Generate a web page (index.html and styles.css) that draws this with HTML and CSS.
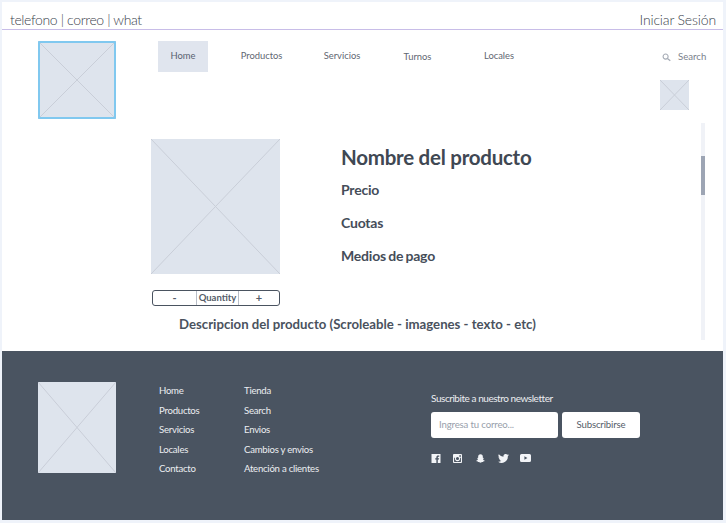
FILE: index.html
```html
<!DOCTYPE html>
<html lang="es">
<head>
<meta charset="utf-8">
<title>Producto</title>
<link rel="stylesheet" href="styles.css">
</head>
<body>
<div class="frame">
  <div class="topbar"><span class="contact">telefono | correo | what</span><span class="login">Iniciar Sesión</span></div>
  <header class="header">
    <svg class="ph ph-logo" viewBox="0 0 78 78" preserveAspectRatio="none"><rect width="78" height="78" fill="#dee4ed"/><path d="M0 0L78 78M78 0L0 78" stroke="#c9ced8" stroke-width="1"/></svg>
    <nav class="nav">
      <a class="nav-item nav-home">Home</a>
      <a class="nav-item nav-productos">Productos</a>
      <a class="nav-item nav-servicios">Servicios</a>
      <a class="nav-item nav-turnos">Turnos</a>
      <a class="nav-item nav-locales">Locales</a>
    </nav>
    <div class="side">
      <div class="search">
        <svg class="search-icon" viewBox="0 0 10 10"><circle cx="4" cy="4" r="2.8" fill="none" stroke="#a5abb5" stroke-width="1.2"/><path d="M6 6L9.2 8.6" stroke="#a5abb5" stroke-width="1.4"/></svg>
        <span>Search</span>
      </div>
      <svg class="ph ph-cart" viewBox="0 0 29 30" preserveAspectRatio="none"><rect width="29" height="30" fill="#dee4ed"/><path d="M0 0L29 30M29 0L0 30" stroke="#c9ced8" stroke-width="1"/></svg>
    </div>
  </header>
  <main class="main">
    <div class="product">
      <div class="gallery">
        <svg class="ph ph-product" viewBox="0 0 129 135" preserveAspectRatio="none"><rect width="129" height="135" fill="#dee4ed"/><path d="M0 0L129 135M129 0L0 135" stroke="#c9ced8" stroke-width="1"/></svg>
        <div class="qty"><span class="qty-btn">-</span><span class="qty-label">Quantity</span><span class="qty-btn">+</span></div>
      </div>
      <div class="info">
        <h1 class="title">Nombre del producto</h1>
        <p class="line">Precio</p>
        <p class="line">Cuotas</p>
        <p class="line">Medios de pago</p>
      </div>
    </div>
    <p class="desc">Descripcion del producto (Scroleable - imagenes - texto - etc)</p>
    <div class="scrollbar"><div class="thumb"></div></div>
  </main>
  <footer class="footer">
    <svg class="ph ph-foot" viewBox="0 0 78 91" preserveAspectRatio="none"><rect width="78" height="91" fill="#dee4ed"/><path d="M0 0L78 91M78 0L0 91" stroke="#c9ced8" stroke-width="1"/></svg>
    <ul class="links links-a">
      <li>Home</li><li>Productos</li><li>Servicios</li><li>Locales</li><li>Contacto</li>
    </ul>
    <ul class="links links-b">
      <li>Tienda</li><li>Search</li><li>Envios</li><li>Cambios y envios</li><li>Atención a clientes</li>
    </ul>
    <div class="news">
      <div class="news-title">Suscribite a nuestro newsletter</div>
      <div class="news-form">
        <div class="news-input">Ingresa tu correo...</div>
        <div class="news-btn">Subscribirse</div>
      </div>
      <div class="social">
        <svg viewBox="0 0 10 10"><path fill="#f2f4f7" fill-rule="evenodd" d="M0 0H10V10H7V6.2H8.3L8.5 4.7H7V3.8C7 3.3 7.2 3 7.8 3H8.6V1.7C8.3 1.6 7.8 1.6 7.3 1.6 6.2 1.6 5.4 2.3 5.4 3.6V4.7H4.1V6.2H5.4V10H0Z"/></svg>
        <svg viewBox="0 0 10 10"><path fill="#f2f4f7" fill-rule="evenodd" d="M1 0H9A1 1 0 0 1 10 1V9A1 1 0 0 1 9 10H1A1 1 0 0 1 0 9V1A1 1 0 0 1 1 0ZM1.2 4.2V8.4C1.2 8.7 1.3 8.8 1.6 8.8H8.4C8.7 8.8 8.8 8.7 8.8 8.4V4.2H7.7A2.9 2.9 0 1 1 2.3 4.2ZM7 1.3V3H8.8V1.3ZM5 3.3A1.7 1.7 0 1 0 5 6.7 1.7 1.7 0 1 0 5 3.3Z"/></svg>
        <svg viewBox="0 0 10 10"><path fill="#f2f4f7" d="M5 .4C6.8.4 7.6 1.7 7.6 3.1V4.2L8.6 4.4C8.4 5.3 7.8 5.9 8 6.4 8.2 6.9 9.2 7.2 9.8 7.4 9.6 8 8.8 8 8.1 8.2L7.7 9C6.8 8.8 6.2 9 5 9.6 3.8 9 3.2 8.8 2.3 9L1.9 8.2C1.2 8 .4 8 .2 7.4.8 7.2 1.8 6.9 2 6.4 2.2 5.9 1.6 5.3 1.4 4.4L2.4 4.2V3.1C2.4 1.7 3.2.4 5 .4Z"/></svg>
        <svg viewBox="0 0 12 10"><path fill="#f2f4f7" d="M12 1.2C11.6 1.4 11.1 1.5 10.6 1.6 11.1 1.3 11.5.8 11.7.2 11.2.5 10.7.7 10.1.8A2.4 2.4 0 0 0 6 3 6.9 6.9 0 0 1 .8.4 2.4 2.4 0 0 0 1.6 3.7C1.2 3.7.8 3.6.5 3.4 .5 4.6 1.3 5.6 2.4 5.8 2 5.9 1.6 5.9 1.3 5.9 1.6 6.9 2.5 7.6 3.6 7.6A4.9 4.9 0 0 1 0 8.6 6.9 6.9 0 0 0 10.8 2.5C11.3 2.2 11.7 1.7 12 1.2Z"/></svg>
        <svg viewBox="0 0 11 8"><path fill="#f2f4f7" fill-rule="evenodd" d="M1.5 0H9.5A1.5 1.5 0 0 1 11 1.5V6.5A1.5 1.5 0 0 1 9.500 8H1.5A1.5 1.500 0 0 1 0 6.500V1.500A1.500 1.500 0 0 1 1.500 0ZM4.400 2.200V5.800L7.400 4Z"/></svg>
      </div>
    </div>
  </footer>
</div>
</body>
</html>
```
FILE: styles.css
```css
* { box-sizing: border-box; }
html, body { margin: 0; padding: 0; }
body {
  width: 726px;
  height: 523px;
  padding: 2px 3px 3px 2px;
  background: #eff3fa;
  font-family: "Lato", "Liberation Sans", sans-serif;
  overflow: hidden;
}
.frame {
  width: 721px;
  height: 518px;
  background: #fff;
  display: flex;
  flex-direction: column;
}
.ph { display: block; flex: none; }

.topbar {
  height: 28px;
  flex: none;
  border-bottom: 1px solid #c8bde8;
  padding: 10px 7px 0 8px;
  display: flex;
  justify-content: space-between;
  font-size: 14px;
  line-height: 15px;
  font-weight: 300;
  color: #3a424c;
}
.contact { letter-spacing: -.37px; }
.login { letter-spacing: -.15px; }

.header {
  height: 93px;
  flex: none;
  display: flex;
  padding: 11px 17px 0 36px;
}
.ph-logo {
  width: 78px;
  height: 78px;
  outline: 2px solid #80c8ef;
  outline-offset: -2px;
  border-radius: 1px;
}
.nav {
  margin-left: 42px;
  display: grid;
  grid-template-columns: 50px 107px 54px 97px 66px;
  align-items: start;
  height: 31px;
  font-size: 9.4px;
  color: #5f6772;
}
.nav-item { display: block; text-align: center; line-height: 12px; }
.nav-home { background: #e0e5ee; height: 31px; padding-top: 9px; color: #596270; }
.nav-productos { padding-top: 9px; }
.nav-servicios { padding-top: 9px; }
.nav-turnos { padding-top: 10px; }
.nav-locales { padding-top: 9px; }
.side {
  margin-left: auto;
  display: flex;
  flex-direction: column;
  align-items: center;
  width: 46px;
}
.search {
  display: flex;
  align-items: center;
  gap: 7px;
  font-size: 9.6px;
  line-height: 12px;
  color: #7a818c;
  padding: 10px 0 0 2px;
  width: 46px;
}
.search-icon { width: 9px; height: 9px; flex: none; }
.ph-cart { width: 29px; height: 30px; margin-top: 17px; margin-right: 17px; }

.main {
  flex: 1;
  min-height: 0;
  position: relative;
}
.product {
  display: flex;
  padding: 16px 0 0 149px;
}
.gallery { width: 129px; }
.ph-product { width: 129px; height: 135px; }
.qty {
  margin: 16px 0 0 1px;
  height: 16px;
  width: 128px;
  display: grid;
  grid-template-columns: 43px 43px 1fr;
  border: 1px solid #4a5360;
  border-radius: 3px;
  font-size: 9.5px;
  font-weight: 700;
  color: #555d69;
  text-align: center;
  line-height: 14px;
}
.qty-label { border: solid #b9bec7; border-width: 0 1px; }
.qty-btn { font-size: 11px; }
.info { margin-left: 61px; padding-top: 5px; }
.title {
  margin: 0;
  font-size: 20.5px;
  line-height: 26px;
  font-weight: 700;
  letter-spacing: -.25px;
  color: #404853;
}
.line {
  margin: 0;
  font-size: 14px;
  line-height: 17px;
  font-weight: 700;
  letter-spacing: -.2px;
  word-spacing: -1px;
  color: #454d59;
}
.title + .line { margin-top: 11px; }
.line + .line { margin-top: 16px; }
.desc {
  margin: 0;
  position: absolute;
  left: 177px;
  top: 193px;
  font-size: 13.2px;
  line-height: 16px;
  font-weight: 700;
  color: #4a525e;
}
.scrollbar {
  position: absolute;
  left: 699px;
  top: 0;
  width: 4px;
  height: 217px;
  background: #f0f2f7;
}
.thumb {
  margin-top: 33px;
  height: 39px;
  background: #9da5b4;
}

.footer {
  height: 169px;
  flex: none;
  background: #4a5461;
  display: flex;
  padding: 31px 0 0 36px;
  color: #eceef1;
}
.ph-foot { width: 78px; height: 91px; }
.links {
  list-style: none;
  margin: 0;
  padding: 3px 0 0;
  font-size: 9.6px;
  letter-spacing: -.25px;
}
.links li { height: 19.6px; line-height: 12px; }
.links-a { margin-left: 43px; width: 85px; }
.links-b { width: 187px; }
.news { padding-top: 10px; }
.news-title { font-size: 10px; line-height: 12px; letter-spacing: -.45px; }
.news-form { display: flex; gap: 4px; margin-top: 8px; }
.news-input, .news-btn {
  height: 26px;
  background: #fff;
  border-radius: 3px;
  font-size: 9.6px;
  line-height: 26px;
  letter-spacing: -.15px;
}
.news-input { width: 127px; padding-left: 8px; color: #98a0ab; }
.news-btn { width: 78px; text-align: center; color: #555d69; }
.social { display: flex; align-items: center; margin-top: 15px; height: 10px; }
.social svg { display: block; flex: none; height: 9px; }
.social svg:nth-child(1) { width: 10px; }
.social svg:nth-child(2) { width: 9px; margin-left: 12px; }
.social svg:nth-child(3) { width: 11px; margin-left: 13px; }
.social svg:nth-child(4) { width: 11px; margin-left: 12px; }
.social svg:nth-child(5) { width: 11px; margin-left: 11px; height: 8px; }
```
